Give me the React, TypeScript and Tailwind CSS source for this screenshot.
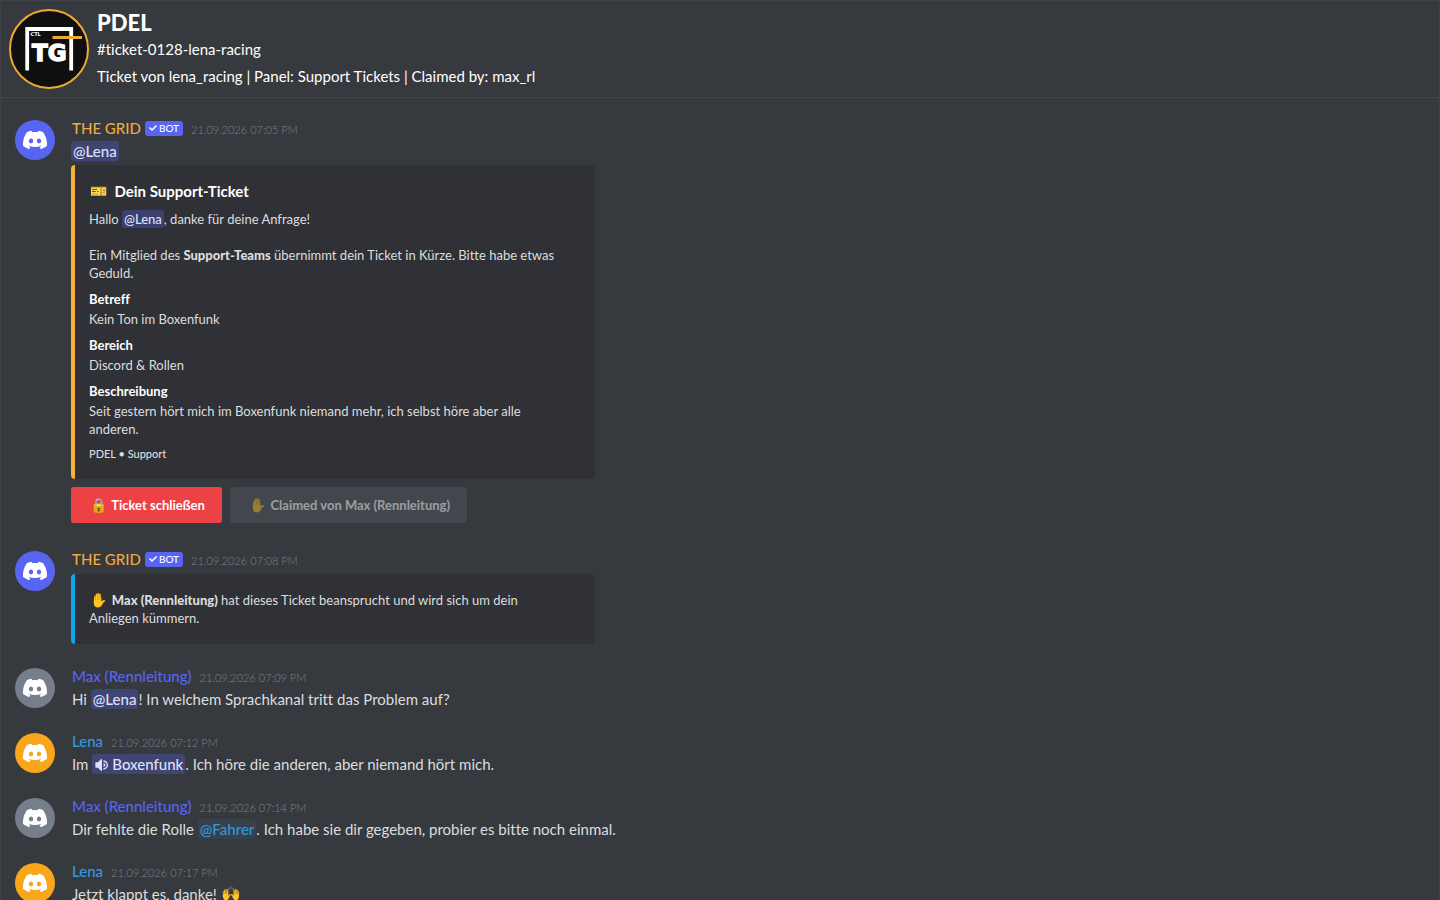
import type { ReactNode } from 'react';
import { FaCheck } from 'react-icons/fa';
import { SiDiscord } from 'react-icons/si';

function Logo() {
  return (
    <svg className="size-20 shrink-0" viewBox="0 0 80 80" role="img" aria-label="PDEL">
      <circle cx="40" cy="40" r="39" fill="#0f0f10" stroke="#f0a832" strokeWidth="2" />
      <path d="M18.2 61.5V20H62.2V61.5" fill="none" stroke="#fff" strokeWidth="3.8" />
      <text x="21.5" y="26.5" fill="#fff" fontFamily="DejaVu Sans" fontWeight="700" fontSize="5">
        CTL
      </text>
      <text x="23" y="51.5" fill="#fff" stroke="#fff" strokeWidth="1.4" fontFamily="DejaVu Sans" fontWeight="700" fontSize="23">
        TG
      </text>
      <path d="M43.5 28.5H73" stroke="#f0a832" strokeWidth="3" />
    </svg>
  );
}

function Emoji({ symbol, label, large = false }: { symbol: string; label: string; large?: boolean }) {
  return (
    <span
      role="img"
      aria-label={label}
      className={`mx-px inline-block font-['Noto_Color_Emoji',sans-serif] ${large ? 'text-base leading-none' : 'text-sm leading-none'}`}
    >
      {symbol}
    </span>
  );
}

function Mention({ children }: { children: ReactNode }) {
  return (
    <a href="#mention" className="rounded-[3px] bg-[#5865f2]/30 px-0.5 py-px font-medium text-[#dee0fc]">
      {children}
    </a>
  );
}

function RoleMention({ children }: { children: ReactNode }) {
  return (
    <a href="#role" className="rounded-[3px] bg-[#3498db]/10 px-0.5 py-px font-medium text-[#3498db]">
      {children}
    </a>
  );
}

function SpeakerIcon() {
  return (
    <svg className="mr-0.5 inline size-4 align-[-3px]" viewBox="0 0 24 24" fill="currentColor" aria-hidden="true">
      <path d="M11.383 3.079C11.009 2.925 10.579 3.01 10.293 3.296L6 8.002H3C2.45 8.002 2 8.453 2 9.002V15.002C2 15.552 2.45 16.002 3 16.002H6L10.293 20.71C10.579 20.996 11.009 21.082 11.383 20.927C11.757 20.772 12 20.407 12 20.002V4.002C12 3.599 11.757 3.232 11.383 3.079ZM14 5.002V7.002C16.757 7.002 19 9.246 19 12.002C19 14.759 16.757 17.002 14 17.002V19.002C17.86 19.002 21 15.863 21 12.002C21 8.143 17.86 5.002 14 5.002ZM14 9.002C15.654 9.002 17 10.349 17 12.002C17 13.657 15.654 15.002 14 15.002V13.002C14.551 13.002 15 12.553 15 12.002C15 11.451 14.551 11.002 14 11.002V9.002Z" />
    </svg>
  );
}

type Author = { name: string; color: string; avatar: string; bot?: boolean };

const grid: Author = { name: 'THE GRID', color: 'text-[#f0a840]', avatar: 'bg-[#5865f2]', bot: true };
const max: Author = { name: 'Max (Rennleitung)', color: 'text-[#5865f2]', avatar: 'bg-[#757e8a]' };
const lena: Author = { name: 'Lena', color: 'text-[#3498db]', avatar: 'bg-[#faa61a]' };

function Message({ author, time, children }: { author: Author; time: string; children: ReactNode }) {
  return (
    <article className="flex gap-4">
      <div className={`mt-[3px] flex size-10 shrink-0 items-center justify-center rounded-full text-white ${author.avatar}`}>
        <SiDiscord size={24} aria-hidden="true" />
      </div>
      <div className="min-w-0 flex-1">
        <header className="flex h-[23px] items-center pb-px pl-px">
          <span className={`text-[15px] leading-[22px] font-medium ${author.color}`}>{author.name}</span>
          {author.bot && (
            <span className="ml-1 flex h-[15px] items-center gap-0.5 rounded-[3px] bg-[#5865f2] px-1 text-[10px] font-medium text-white">
              <FaCheck size={8} aria-hidden="true" />
              BOT
            </span>
          )}
          <time className="ml-2 pt-1 text-[11px] font-light text-[#7f838a]">{time}</time>
        </header>
        {children}
      </div>
    </article>
  );
}

function Text({ children }: { children: ReactNode }) {
  return <p className="pl-px text-[15px] leading-[22px]">{children}</p>;
}

function Embed({ accent, children }: { accent: string; children: ReactNode }) {
  return (
    <div className={`mt-[3px] mb-px max-w-[524px] rounded border-l-4 bg-[#2f3136] py-[17px] pr-7 pl-[14px] text-[13px] leading-[18px] ${accent}`}>
      {children}
    </div>
  );
}

function Field({ name, children }: { name: string; children: ReactNode }) {
  return (
    <div className="flex flex-col gap-0.5">
      <dt className="font-bold text-white">{name}</dt>
      <dd>{children}</dd>
    </div>
  );
}

export default function App() {
  return (
    <div className="min-h-screen border border-[#3e4147] bg-[#36393e] font-['Lato','Noto_Color_Emoji',sans-serif] text-[#dcddde] [font-variant-ligatures:none]">
      <header className="flex gap-2 border-b border-[#43464c] px-2 pt-2 pb-[7px] text-white">
        <Logo />
        <div className="flex flex-col text-[15px] leading-[27px]">
          <h1 className="text-[22px] leading-[27px] font-black">PDEL</h1>
          <p>#ticket-0128-lena-racing</p>
          <p>Ticket von lena_racing | Panel: Support Tickets | Claimed by: max_rl</p>
        </div>
      </header>

      <main className="flex flex-col gap-5 px-[14px] py-[19px]">
        <Message author={grid} time="21.09.2026 07:05 PM">
          <p className="text-[15px] leading-[22px]">
            <Mention>@Lena</Mention>
          </p>
          <Embed accent="border-[#f9b233]">
            <h2 className="flex h-[18px] items-center gap-1.5 text-[15px] leading-[18px] font-bold text-white">
              <Emoji symbol="🎫" label="Ticket" />
              Dein Support-Ticket
            </h2>
            <p className="mt-2.5">
              Hallo <Mention>@Lena</Mention>, danke für deine Anfrage!
            </p>
            <p className="mt-[18px]">
              Ein Mitglied des <strong className="font-black">Support-Teams</strong> übernimmt dein Ticket in Kürze. Bitte habe etwas
              Geduld.
            </p>
            <dl className="my-2 flex flex-col gap-2">
              <Field name="Betreff">Kein Ton im Boxenfunk</Field>
              <Field name="Bereich">Discord &amp; Rollen</Field>
              <Field name="Beschreibung">
                Seit gestern hört mich im Boxenfunk niemand mehr, ich selbst höre aber alle anderen.
              </Field>
            </dl>
            <footer className="text-[11px] leading-4 font-medium">PDEL • Support</footer>
          </Embed>
          <div className="flex flex-wrap gap-2 pt-[7px] pb-[5px] text-[13px] font-bold">
            <button type="button" className="h-9 rounded-[3px] bg-[#ed4245] pt-0.5 pr-[17px] pl-[18px] text-white">
              <Emoji symbol="🔒" label="Schloss" /> Ticket schließen
            </button>
            <button type="button" disabled className="h-9 rounded-[3px] bg-[#4f545c] pt-0.5 pr-[17px] pl-[18px] text-white opacity-50">
              <Emoji symbol="✋" label="Hand" /> Claimed von Max (Rennleitung)
            </button>
          </div>
        </Message>

        <Message author={grid} time="21.09.2026 07:08 PM">
          <Embed accent="border-[#0ea5e9]">
            <p>
              <Emoji symbol="✋" label="Hand" /> <strong className="font-black">Max (Rennleitung)</strong> hat dieses Ticket
              beansprucht und wird sich um dein Anliegen kümmern.
            </p>
          </Embed>
        </Message>

        <Message author={max} time="21.09.2026 07:09 PM">
          <Text>
            Hi <Mention>@Lena</Mention>! In welchem Sprachkanal tritt das Problem auf?
          </Text>
        </Message>

        <Message author={lena} time="21.09.2026 07:12 PM">
          <Text>
            Im{' '}
            <Mention>
              <SpeakerIcon />
              Boxenfunk
            </Mention>
            . Ich höre die anderen, aber niemand hört mich.
          </Text>
        </Message>

        <Message author={max} time="21.09.2026 07:14 PM">
          <Text>
            Dir fehlte die Rolle <RoleMention>@Fahrer</RoleMention>. Ich habe sie dir gegeben, probier es bitte noch einmal.
          </Text>
        </Message>

        <Message author={lena} time="21.09.2026 07:17 PM">
          <Text>
            Jetzt klappt es, danke! <Emoji symbol="🙌" label="Hände hoch" large />
          </Text>
        </Message>
      </main>
    </div>
  );
}
